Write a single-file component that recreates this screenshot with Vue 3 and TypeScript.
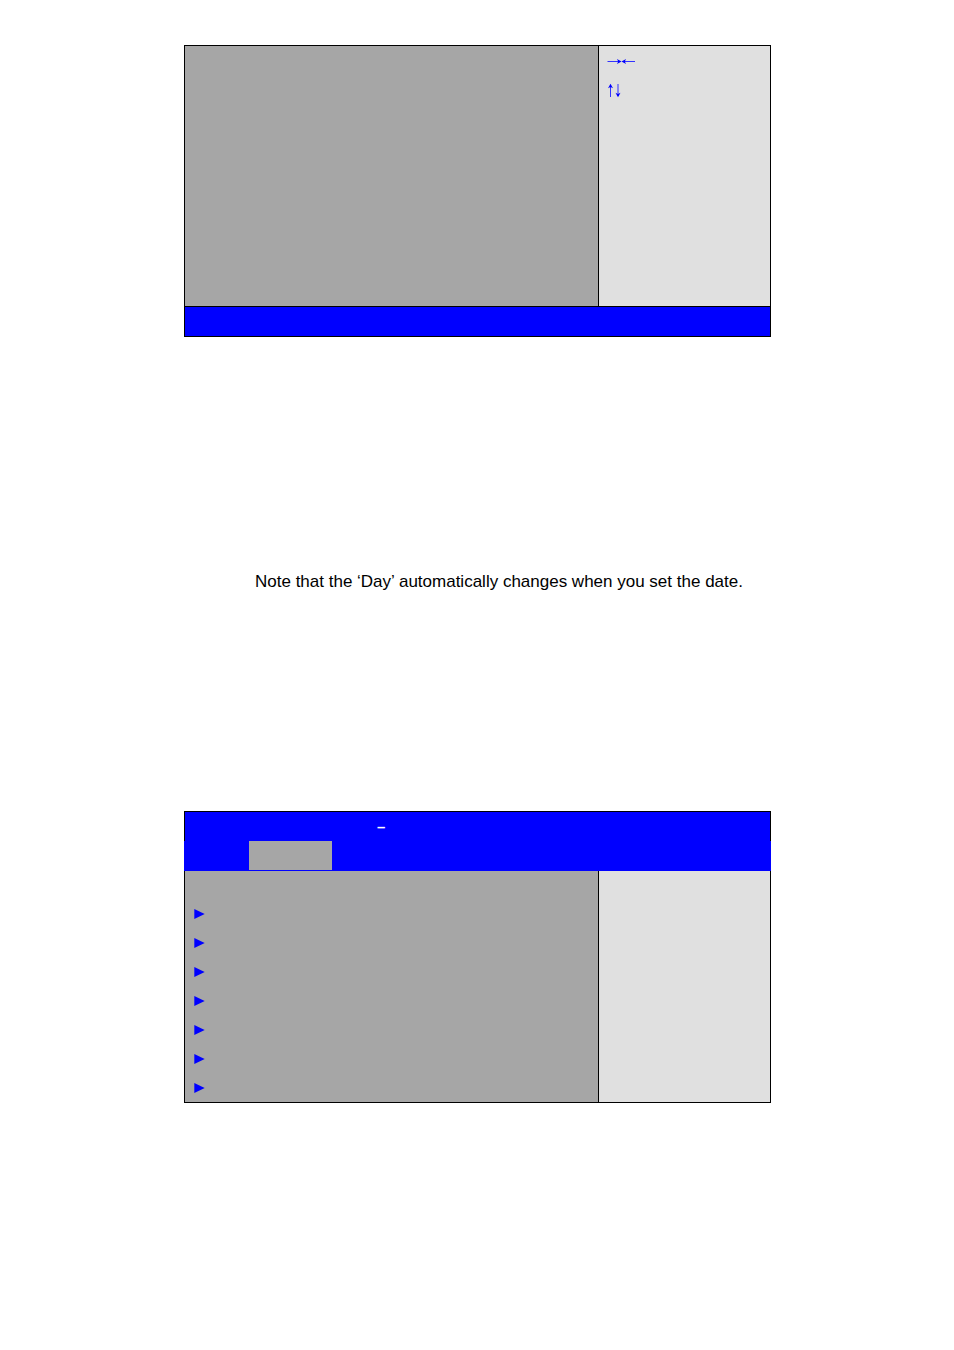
<script setup lang="ts">
interface KeyHint {
  label: string
  shaft: string
  heads: string
}

const keyHints: KeyHint[] = [
  {
    label: 'Left and right arrow keys',
    shaft: 'M0.5 15.5H13M16 15.5H28',
    heads: 'M14.5 15.5L10 13L11.2 15.5L10 18ZM14.5 15.5L19 13L17.8 15.5L19 18Z',
  },
  {
    label: 'Up and down arrow keys',
    shaft: 'M3.5 10V22M11 9V21',
    heads: 'M3.5 8.8L1 13.2L3.5 12L6 13.2ZM11 22.2L8.5 17.8L11 19L13.5 17.8Z',
  },
]
const entryCount = 7
</script>

<template>
  <main class="page">
    <section class="screen">
      <div class="body first">
        <div class="settings"></div>
        <aside class="help">
          <svg
            v-for="hint in keyHints"
            :key="hint.label"
            class="hint"
            viewBox="0 0 28 29"
            role="img"
            :aria-label="hint.label"
          >
            <path :d="hint.shaft" class="shaft" />
            <path :d="hint.heads" class="head" />
          </svg>
        </aside>
      </div>
      <footer class="footer"></footer>
    </section>

    <p class="note">Note that the ‘Day’ automatically changes when you set the date.</p>

    <section class="screen">
      <header class="title">–</header>
      <nav class="tabs">
        <button type="button" class="tab" aria-label="Advanced"></button>
      </nav>
      <div class="body second">
        <ul class="settings entries">
          <li v-for="n in entryCount" :key="n" class="entry">
            <svg class="marker" viewBox="0 0 11 10" aria-hidden="true">
              <path d="M0.3 0L10.7 5L0.3 10Z" />
            </svg>
          </li>
        </ul>
        <aside class="help"></aside>
      </div>
    </section>
  </main>
</template>

<style>
body {
  background: #fff;
}
</style>

<style scoped>
.page {
  box-sizing: border-box;
  padding: 45px 183px 0 184px;
  font-family: "Liberation Sans", Arial, sans-serif;
  font-size: 17px;
  color: #000;
}
.screen {
  border: 1px solid #000;
}
.body {
  display: grid;
  grid-template-columns: 1fr 172px;
}
.first {
  min-height: 260px;
}
.second {
  min-height: 231px;
}
.settings {
  background: #a6a6a6;
}
.help {
  box-sizing: border-box;
  padding-left: 8px;
  border-left: 1px solid #000;
  background: #e0e0e0;
}
.hint {
  display: block;
  width: 28px;
  height: 29px;
}
.shaft {
  fill: none;
  stroke: #33f;
  stroke-width: 1;
}
.head {
  fill: #00f;
}
.footer {
  height: 29px;
  border-top: 1px solid #000;
  background: #00f;
}
.note {
  margin: 233px 0 218px;
  padding-left: 71px;
  line-height: 23px;
  white-space: nowrap;
}
.title {
  height: 29px;
  padding-left: 192px;
  background: #00f;
  color: #fff;
  font-size: 15px;
  font-weight: bold;
  line-height: 29px;
}
.tabs {
  display: flex;
  height: 29px;
  margin: 0 -1px;
  padding: 0 65px 1px;
  background: #00f;
}
.tab {
  width: 83px;
  padding: 0;
  border: 0;
  border-radius: 0;
  background: #a6a6a6;
}
.entries {
  display: grid;
  grid-auto-rows: 1fr;
  margin: 0;
  padding: 29px 0 0 9px;
  list-style: none;
}
.entry {
  display: flex;
  align-items: center;
}
.marker {
  width: 11px;
  height: 10px;
  fill: #00f;
}
</style>
